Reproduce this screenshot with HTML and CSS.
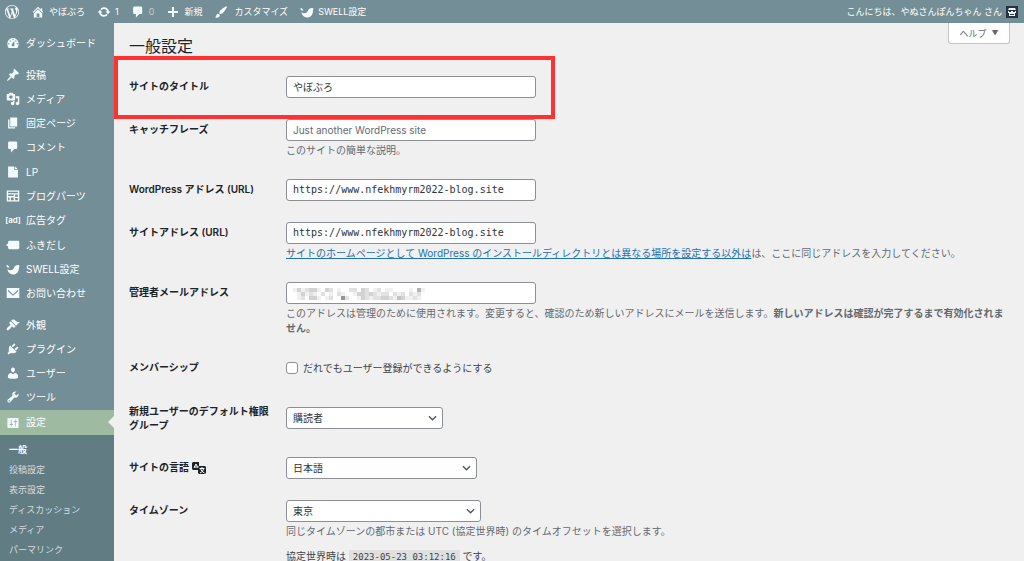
FILE: index.html
```
<!DOCTYPE html>
<html lang="ja">
<head>
<meta charset="utf-8">
<title>一般設定</title>
<link rel="stylesheet" href="styles.css">
</head>
<body>
<svg class="sprite" aria-hidden="true">
  <symbol id="i-wp" viewBox="0 0 20 20"><path d="M20 10c0-5.51-4.49-10-10-10C4.48 0 0 4.49 0 10c0 5.52 4.48 10 10 10 5.51 0 10-4.48 10-10zM7.78 15.37L4.37 6.22c.55-.02 1.17-.08 1.17-.08.5-.06.44-1.13-.06-1.11 0 0-1.45.11-2.37.11-.18 0-.37 0-.58-.01C4.12 2.69 6.87 1.11 10 1.11c2.33 0 4.45.87 6.05 2.34-.68-.11-1.65.39-1.65 1.58 0 .74.45 1.36.9 2.1.35.61.55 1.36.55 2.46 0 1.49-1.4 5-1.4 5l-3.03-8.37c.54-.02.82-.17.82-.17.5-.05.44-1.25-.06-1.22 0 0-1.44.12-2.38.12-.87 0-2.33-.12-2.33-.12-.5-.03-.56 1.2-.06 1.22l.92.08 1.26 3.41zM17.41 10c.24-.64.74-1.87.43-4.25.7 1.29 1.05 2.71 1.05 4.25 0 3.29-1.73 6.24-4.4 7.78.97-2.59 1.94-5.2 2.92-7.78zM6.1 18.09C3.12 16.65 1.11 13.53 1.11 10c0-1.3.23-2.48.72-3.59C3.25 10.3 4.67 14.2 6.1 18.09zm4.03-6.63l2.58 6.98c-.86.29-1.76.45-2.71.45-.79 0-1.57-.11-2.29-.33.81-2.38 1.62-4.74 2.42-7.1z"/></symbol>
  <symbol id="i-home" viewBox="0 0 20 20"><path d="M16 8.5l1.53 1.53-1.06 1.06L10 4.6l-6.47 6.49-1.06-1.06L10 2.5l4 4v-2h2v4zm-6-2.46l6 5.99V18H4v-5.97zM12 17v-5H8v5h4z"/></symbol>
  <symbol id="i-update" viewBox="0 0 20 20"><path d="M10.2 3.28c3.53 0 6.43 2.61 6.92 6h2.08l-3.5 4-3.5-4h2.32c-.45-1.97-2.21-3.45-4.32-3.45-1.45 0-2.73.71-3.54 1.78L4.95 5.66C6.23 4.2 8.11 3.28 10.2 3.28zm-.4 13.44c-3.52 0-6.43-2.61-6.92-6H.8l3.5-4c1.17 1.33 2.33 2.67 3.5 4H5.48c.45 1.97 2.21 3.45 4.32 3.45 1.45 0 2.73-.71 3.54-1.78l1.71 1.95c-1.28 1.46-3.15 2.38-5.25 2.38z"/></symbol>
  <symbol id="i-comment" viewBox="0 0 20 20"><path d="M5 2h9c1.1 0 2 .9 2 2v7c0 1.1-.9 2-2 2h-2l-5 5v-5H5c-1.1 0-2-.9-2-2V4c0-1.1.9-2 2-2z"/></symbol>
  <symbol id="i-plus" viewBox="0 0 20 20"><path d="M17 8.500v3h-5.500V17h-3v-5.500H3v-3h5.500V3h3v5.500z"/></symbol>
  <symbol id="i-brush" viewBox="0 0 20 20"><path d="M18.33 3.57s.27-.8-.31-1.36c-.53-.52-1.22-.24-1.22-.24-.61.3-5.76 3.47-7.67 5.57-.86.96-2.06 3.79-1.09 4.82.92.98 3.96-.17 4.79-1 2.06-2.06 5.21-7.17 5.5-7.79zM1.4 17.65c2.37-1.56 1.46-3.41 3.23-4.64.93-.65 2.22-.62 3.08.29.63.67.8 2.57-.16 3.46-1.57 1.45-4 1.55-6.15.89z"/></symbol>
  <symbol id="i-swell" viewBox="0 0 20 20"><path d="M2 10.500c3.500 2.200 7.500 1.500 9-1.500 1.200-3.200 4-5 7.500-4.500l1 1.500-1 1c.6 6-3 11-8.500 11-4.300 0-7.200-3-8-7.500z"/><path d="M0 5l2.500-.5L5 7.500l-2.500.8z"/></symbol>
  <symbol id="i-dash" viewBox="0 0 20 20"><path d="M3.76 17h12.48c1.34-1.63 1.76-3.9 1.76-6 0-4.42-3.58-8-8-8s-8 3.58-8 8c0 2.1.42 4.37 1.76 6zM10 4c.55 0 1 .45 1 1s-.45 1-1 1-1-.45-1-1 .45-1 1-1zM6 6c.55 0 1 .45 1 1s-.45 1-1 1-1-.45-1-1 .45-1 1-1zm8 0c.55 0 1 .45 1 1s-.45 1-1 1-1-.45-1-1 .45-1 1-1zm-5.370 5.550L12 7v6c0 1.100-.9 2-2 2s-2-.9-2-2c0-.57.24-1.080.63-1.450zM4 10c.55 0 1 .45 1 1s-.45 1-1 1-1-.45-1-1 .45-1 1-1zm12 0c.55 0 1 .45 1 1s-.45 1-1 1-1-.45-1-1 .45-1 1-1z"/></symbol>
  <symbol id="i-pin" viewBox="0 0 20 20"><path d="M10.44 3.02l1.82-1.82 6.36 6.35-1.83 1.82c-1.05-.68-2.48-.57-3.41.36l-.75.75c-.92.93-1.04 2.35-.35 3.41l-1.83 1.82-2.41-2.41-2.8 2.79c-.42.42-3.38 2.71-3.8 2.29s1.86-3.39 2.28-3.81l2.79-2.79L4.1 9.36l1.83-1.82c1.05.69 2.48.57 3.4-.36l.75-.75c.93-.92 1.05-2.35.36-3.41z"/></symbol>
  <symbol id="i-media" viewBox="0 0 20 20"><path d="M13 11V4c0-.55-.45-1-1-1h-1.67L9 1H5L3.67 3H2c-.55 0-1 .45-1 1v7c0 .55.45 1 1 1h10c.55 0 1-.45 1-1zM7 4.5c1.38 0 2.5 1.12 2.5 2.5S8.38 9.5 7 9.5 4.5 8.38 4.5 7 5.62 4.5 7 4.5zM14 6h5v10.5c0 1.38-1.12 2.5-2.5 2.5S14 17.88 14 16.5s1.12-2.5 2.5-2.5c.17 0 .34.02.5.05V9h-3V6zm-4 8.05V13h2v3.5c0 1.38-1.12 2.5-2.5 2.5S7 17.88 7 16.5 8.12 14 9.5 14c.17 0 .34.02.5.05z"/></symbol>
  <symbol id="i-page" viewBox="0 0 20 20"><path d="M6 15V2h10v13H6zm-1 1h8v2H3V5h2v11z"/></symbol>
  <symbol id="i-doc" viewBox="0 0 20 20"><path d="M3 2h9v5h5v11H3zM13 2l4 4h-4z"/></symbol>
  <symbol id="i-blocks" viewBox="0 0 20 20"><path fill-rule="evenodd" d="M1 2h18v16H1zM3 4v2h14V4zM3 8v2h8V8zM13 8v3h4V8zM3 12v4h2v-4zM7 12v4h4v-4zM13 13v3h4v-3z"/></symbol>
  <symbol id="i-balloon" viewBox="0 0 20 20"><path d="M5 4h12c1.100 0 2 .9 2 2v8c0 1.100-.9 2-2 2H5c-1.100 0-2-.9-2-2v-2L0 10l3-2V6c0-1.100.9-2 2-2z"/></symbol>
  <symbol id="i-mail" viewBox="0 0 20 20"><path fill-rule="evenodd" d="M1 3h18v14H1zM3 5.500l7 6.500 7-6.500v2.500l-7 6-7-6z"/></symbol>
  <symbol id="i-look" viewBox="0 0 20 20"><path d="M14.48 11.06L7.41 3.99l1.5-1.5c.5-.56 2.3-.47 3.51.32 1.21.8 1.43 1.28 2.91 2.1 1.18.64 2.45 1.26 4.45.85zm-.71.71L6.7 4.7 4.93 6.47c-.39.39-.39 1.02 0 1.41l1.06 1.06c.39.39.39 1.03 0 1.42-.6.6-1.43 1.11-2.21 1.69-.35.26-.7.53-1.01.84C1.43 14.23.4 16.08 1.4 17.07c.99 1 2.84-.03 4.18-1.36.31-.31.58-.66.85-1.02.57-.78 1.08-1.61 1.69-2.21.39-.39 1.02-.39 1.41 0l1.06 1.06c.39.39 1.02.39 1.41 0z"/></symbol>
  <symbol id="i-plug" viewBox="0 0 20 20"><path d="M13.11 4.36L9.87 7.6 8 5.73l3.24-3.24c.35-.34 1.05-.2 1.56.32.52.51.66 1.21.31 1.55zm-8 1.77l.91-1.12 9.01 9.01-1.19.84c-.71.71-2.63 1.16-3.82 1.16H6.14L4.9 17.26c-.59.59-1.54.59-2.12 0-.59-.58-.59-1.53 0-2.12l1.24-1.24v-3.88c0-1.13.4-3.19 1.09-3.89zm7.26 3.97l3.24-3.24c.34-.35 1.04-.21 1.55.31.52.51.66 1.21.31 1.55l-3.24 3.25z"/></symbol>
  <symbol id="i-user" viewBox="0 0 20 20"><path d="M10 9.25c-2.27 0-2.73-3.44-2.73-3.44C7 4.02 7.82 2 9.97 2c2.16 0 2.98 2.02 2.71 3.81 0 0-.41 3.44-2.68 3.44zm0 2.57L12.72 10c2.39 0 4.52 2.33 4.52 4.53v2.49s-3.65 1.13-7.24 1.13c-3.65 0-7.24-1.13-7.24-1.13v-2.49c0-2.25 1.94-4.48 4.47-4.48z"/></symbol>
  <symbol id="i-tool" viewBox="0 0 20 20"><path d="M16.68 9.77c-1.34 1.34-3.3 1.67-4.95.99l-5.41 6.52c-.99.99-2.59.99-3.58 0s-.99-2.59 0-3.57l6.52-5.42c-.68-1.65-.35-3.61.99-4.95 1.28-1.28 3.12-1.62 4.72-1.06l-2.89 2.89 2.82 2.82 2.86-2.87c.53 1.58.18 3.39-1.08 4.65zM3.81 16.21c.4.39 1.04.39 1.43 0 .4-.4.4-1.04 0-1.43-.39-.4-1.03-.4-1.43 0-.39.39-.39 1.03 0 1.43z"/></symbol>
  <symbol id="i-set" viewBox="0 0 20 20"><path d="M18 16V4c0-.55-.45-1-1-1H3c-.55 0-1 .45-1 1v12c0 .55.45 1 1 1h14c.55 0 1-.45 1-1zM8 11h1c.55 0 1 .45 1 1s-.45 1-1 1H8v1.5c0 .28-.22.5-.5.5s-.5-.22-.5-.5V13H6c-.55 0-1-.45-1-1s.45-1 1-1h1V5.500c0-.28.22-.5.5-.5s.5.22.5.5V11zm5-2h-1c-.55 0-1-.45-1-1s.45-1 1-1h1V5.500c0-.28.22-.5.5-.5s.5.22.5.5V7h1c.55 0 1 .45 1 1s-.45 1-1 1h-1v5.500c0 .28-.22.5-.5.5s-.5-.22-.5-.5V9z"/></symbol>
</svg>

<header class="bar">
  <nav class="bar-links" aria-label="ツールバー">
    <a class="bar-item" href="#" aria-label="WordPress"><svg class="icon"><use href="#i-wp"/></svg></a>
    <a class="bar-item" href="#"><svg class="icon"><use href="#i-home"/></svg>やぼぶろ</a>
    <a class="bar-item" href="#"><svg class="icon"><use href="#i-update"/></svg>1</a>
    <a class="bar-item" href="#"><svg class="icon"><use href="#i-comment"/></svg><span class="dim">0</span></a>
    <a class="bar-item" href="#"><svg class="icon"><use href="#i-plus"/></svg>新規</a>
    <a class="bar-item wide" href="#"><svg class="icon"><use href="#i-brush"/></svg>カスタマイズ</a>
    <a class="bar-item" href="#"><svg class="icon"><use href="#i-swell"/></svg>SWELL設定</a>
  </nav>
  <a class="bar-item" href="#">こんにちは、やぬさんぽんちゃん さん
    <svg class="avatar" viewBox="0 0 12 12"><path fill="#24323f" d="M0 0h12v12H0z"/><path fill="#eef3f5" d="M3 2h6l1 2H2zM2 5h8v2H2zM3 7h6v3H3z"/><path fill="#24323f" d="M3 5h2v1H3zM7 5h2v1H7zM4 8h4v1H4z"/></svg>
  </a>
</header>

<div class="shell">
  <aside class="side">
    <nav class="menu" aria-label="メインメニュー">
      <ul class="group first">
        <li><a class="item" href="#"><svg class="icon"><use href="#i-dash"/></svg>ダッシュボード</a></li>
      </ul>
      <ul class="group">
        <li><a class="item" href="#"><svg class="icon"><use href="#i-pin"/></svg>投稿</a></li>
        <li><a class="item" href="#"><svg class="icon"><use href="#i-media"/></svg>メディア</a></li>
        <li><a class="item" href="#"><svg class="icon"><use href="#i-page"/></svg>固定ページ</a></li>
        <li><a class="item" href="#"><svg class="icon"><use href="#i-comment"/></svg>コメント</a></li>
      </ul>
      <ul class="group">
        <li><a class="item" href="#"><svg class="icon"><use href="#i-doc"/></svg>LP</a></li>
        <li><a class="item" href="#"><svg class="icon"><use href="#i-blocks"/></svg>ブログパーツ</a></li>
        <li><a class="item" href="#"><span class="ad">[ad]</span>広告タグ</a></li>
      </ul>
      <ul class="group last">
        <li><a class="item" href="#"><svg class="icon"><use href="#i-balloon"/></svg>ふきだし</a></li>
        <li><a class="item" href="#"><svg class="icon"><use href="#i-swell"/></svg>SWELL設定</a></li>
        <li><a class="item" href="#"><svg class="icon"><use href="#i-mail"/></svg>お問い合わせ</a></li>
      </ul>
      <ul class="group">
        <li><a class="item" href="#"><svg class="icon"><use href="#i-look"/></svg>外観</a></li>
        <li><a class="item" href="#"><svg class="icon"><use href="#i-plug"/></svg>プラグイン</a></li>
        <li><a class="item" href="#"><svg class="icon"><use href="#i-user"/></svg>ユーザー</a></li>
        <li><a class="item" href="#"><svg class="icon"><use href="#i-tool"/></svg>ツール</a></li>
      </ul>
      <a class="item current" href="#"><svg class="icon"><use href="#i-set"/></svg>設定</a>
      <ul class="sub">
        <li><a class="sub-item active" href="#">一般</a></li>
        <li><a class="sub-item" href="#">投稿設定</a></li>
        <li><a class="sub-item" href="#">表示設定</a></li>
        <li><a class="sub-item" href="#">ディスカッション</a></li>
        <li><a class="sub-item" href="#">メディア</a></li>
        <li><a class="sub-item" href="#">パーマリンク</a></li>
      </ul>
    </nav>
  </aside>

  <main class="main">
    <div class="top">
      <h1 class="title">一般設定</h1>
      <button class="help" type="button">ヘルプ<span class="caret">▼</span></button>
    </div>
    <form class="form">
      <div class="row marked">
        <label class="name" for="blogname">サイトのタイトル</label>
        <div class="field"><input class="text" id="blogname" type="text" value="やぼぶろ"></div>
      </div>
      <div class="row">
        <label class="name" for="tagline">キャッチフレーズ</label>
        <div class="field">
          <input class="text" id="tagline" type="text" placeholder="Just another WordPress site">
          <p class="desc">このサイトの簡単な説明。</p>
        </div>
      </div>
      <div class="row">
        <label class="name" for="siteurl">WordPress アドレス (URL)</label>
        <div class="field"><input class="text code" id="siteurl" type="url" value="https://www.nfekhmyrm2022-blog.site"></div>
      </div>
      <div class="row">
        <label class="name" for="home">サイトアドレス (URL)</label>
        <div class="field">
          <input class="text code" id="home" type="url" value="https://www.nfekhmyrm2022-blog.site">
          <p class="desc"><a class="link" href="#">サイトのホームページとして WordPress のインストールディレクトリとは異なる場所を設定する以外は</a>は、ここに同じアドレスを入力してください。</p>
        </div>
      </div>
      <div class="row">
        <label class="name" for="email">管理者メールアドレス</label>
        <div class="field">
          <div class="masked">
            <input class="text" id="email" type="email">
            <svg class="mosaic" id="mosaic" viewBox="0 0 132 12" aria-hidden="true"></svg>
          </div>
          <p class="desc">このアドレスは管理のために使用されます。変更すると、確認のため新しいアドレスにメールを送信します。<strong>新しいアドレスは確認が完了するまで有効化されません。</strong></p>
        </div>
      </div>
      <div class="row">
        <span class="name">メンバーシップ</span>
        <div class="field"><label class="check"><input class="box" type="checkbox">だれでもユーザー登録ができるようにする</label></div>
      </div>
      <div class="row middle">
        <label class="name" for="role">新規ユーザーのデフォルト権限グループ</label>
        <div class="field"><select class="select role" id="role"><option>購読者</option></select></div>
      </div>
      <div class="row">
        <label class="name" for="lang">サイトの言語
          <svg class="translate" viewBox="0 0 14 12" aria-hidden="true"><path d="M1 0h6v4H6v4H1L0 7V1z"/><path d="M7 4h6l1 1v6l-1 1H7L6 11V5z"/><path class="cut" d="M2 6l2-4 2 4M2.500 5h2.500M7.500 6.500h5M10 5v1.500M8 11c2-1 3.500-2.500 3.500-4.500M12.500 11c-2-1-3.500-2.500-4-4.500"/></svg>
        </label>
        <div class="field"><select class="select lang" id="lang"><option>日本語</option></select></div>
      </div>
      <div class="row">
        <label class="name" for="tz">タイムゾーン</label>
        <div class="field">
          <select class="select zone" id="tz"><option>東京</option></select>
          <p class="desc">同じタイムゾーンの都市または UTC (協定世界時) のタイムオフセットを選択します。</p>
          <p class="utc">協定世界時は <code class="stamp">2023-05-23 03:12:16</code> です。</p>
        </div>
      </div>
    </form>
  </main>
</div>
<script src="mosaic.js"></script>
</body>
</html>
```
FILE: styles.css
```
*, *::before, *::after { box-sizing: border-box; }

body {
  margin: 0;
  height: 100vh;
  overflow: hidden;
  display: flex;
  flex-direction: column;
  background: #f0f0f1;
  color: #3c434a;
  font: 10px/15px Inter, "Noto Sans CJK JP", sans-serif;
}

ul { list-style: none; margin: 0; padding: 0; }
p { margin: 0; }
a { color: inherit; text-decoration: none; }
input, select, button { font: inherit; color: #2c3338; margin: 0; }

.sprite { display: none; }

.icon {
  width: 14px;
  height: 14px;
  flex: none;
  fill: #f2fcff;
}

/* toolbar */
.bar {
  flex: none;
  height: 23px;
  padding: 0 6px 0 5px;
  display: flex;
  justify-content: space-between;
  background: #738e96;
  color: #fff;
  font-size: 9px;
}
.bar-links { display: flex; gap: 12px; }
.bar-item { display: flex; align-items: center; gap: 4px; }
.bar-item.wide { gap: 6px; }
.dim { color: #c4d0d3; }
.avatar { width: 12px; height: 12px; }

.shell { flex: 1; display: flex; min-height: 0; }

/* side menu */
.side {
  flex: none;
  width: 114px;
  background: #738e96;
  color: #fff;
}
.menu { padding-top: 8px; }
.group { margin-bottom: 1px; }
.group.first, .group.last { margin-bottom: 8px; }
.item {
  height: 24px;
  padding-left: 6px;
  display: flex;
  align-items: center;
  gap: 6px;
}
.ad {
  width: 14px;
  font-size: 8px;
  font-weight: 600;
  display: flex;
  justify-content: center;
}
.item.current {
  height: 25px;
  background: #9ebaa0;
  position: relative;
}
.item.current::after {
  content: "";
  position: absolute;
  right: 0;
  top: 6px;
  border: 6px solid transparent;
  border-left: 0;
  border-right-color: #f0f0f1;
}
.sub { background: #627c83; padding: 5px 0 20px; }
.sub-item {
  display: block;
  padding-left: 9px;
  font-size: 9px;
  line-height: 20px;
  color: #d5dde0;
}
.sub-item.active { color: #fff; font-weight: 700; }

/* settings page */
.main { flex: 1; min-width: 0; padding: 0 14px 0 15px; }
.top { display: flex; justify-content: space-between; align-items: flex-start; }
.title {
  margin: 11px 0 0;
  font-size: 16px;
  line-height: 24px;
  font-weight: 400;
  color: #1d2327;
}
.help {
  width: 62px;
  height: 21px;
  padding: 0;
  display: flex;
  align-items: center;
  justify-content: center;
  gap: 5px;
  background: #fff;
  border: 1px solid #c3c4c7;
  border-top: 0;
  border-radius: 0 0 3px 3px;
  color: #646970;
  font-size: 9px;
}
.caret { font-size: 7px; }

.form {
  margin-top: 18px;
  padding-right: 6px;
  display: flex;
  flex-direction: column;
  gap: 21px;
}
.row {
  display: grid;
  grid-template-columns: 142px 1fr;
  column-gap: 15px;
}
.row.middle { align-items: center; }
.name {
  padding: 3px 0 0;
  line-height: 14px;
  font-weight: 600;
  color: #1d2327;
}
.middle .name { padding: 4px 0; }

/* red frame round the highlighted row */
.marked { position: relative; }
.marked::after {
  content: "";
  position: absolute;
  top: -20px;
  bottom: -21px;
  left: -15px;
  width: 441px;
  border: 4px solid #ff3131;
  pointer-events: none;
}

.text, .select {
  display: block;
  height: 22px;
  padding: 0 6px;
  border: 1px solid #8c8f94;
  border-radius: 3px;
  background-color: #fff;
}
.text { width: 250px; padding-bottom: 1px; }
.text::placeholder { color: #646970; opacity: 1; }
.code { font-family: "DejaVu Sans Mono", monospace; }
.select {
  appearance: none;
  background-image: url("data:image/svg+xml,%3Csvg xmlns='http://www.w3.org/2000/svg' viewBox='0 0 10 6'%3E%3Cpath d='M1 1l4 4 4-4' fill='none' stroke='%23555' stroke-width='1.5'/%3E%3C/svg%3E");
  background-repeat: no-repeat;
  background-position: right 5px center;
  background-size: 9px 6px;
}
.role { width: 157px; }
.lang { width: 191px; }
.zone { width: 195px; }

.desc { margin-top: 2px; color: #646970; }
.link { color: #2271b1; text-decoration: underline; }

.masked { position: relative; }
.mosaic {
  position: absolute;
  left: 7px;
  top: 6px;
  width: 132px;
  height: 12px;
}

.check { display: flex; align-items: center; gap: 5px; height: 22px; }
.box {
  appearance: none;
  width: 12px;
  height: 12px;
  border: 1px solid #8c8f94;
  border-radius: 3px;
  background: #fff;
}
.translate {
  width: 14px;
  height: 12px;
  vertical-align: middle;
  fill: #1d2327;
}
.cut { fill: none; stroke: #fff; }

.utc { margin-top: 10px; }
.stamp {
  padding: 2px 4px;
  background: #e0e0e1;
  font: 9px/15px "DejaVu Sans Mono", monospace;
}
```
FILE: mosaic.js
```
// Pixelated cover over the e-mail address; each digit is a darkness level of one cell.
const rows = [
  "131233103201002203201201100001051",
  "013121020102100133232122021202120",
  "012033101200720013212233214311210"
];
const svg = document.getElementById("mosaic");
rows.forEach((row, y) => [...row].forEach((level, x) => {
  const cell = document.createElementNS("http://www.w3.org/2000/svg", "rect");
  const tone = 255 - level * 15;
  cell.setAttribute("x", x * 4);
  cell.setAttribute("y", y * 4);
  cell.setAttribute("width", 4);
  cell.setAttribute("height", 4);
  cell.setAttribute("fill", `rgb(${tone},${tone},${tone})`);
  svg.append(cell);
}));
```
